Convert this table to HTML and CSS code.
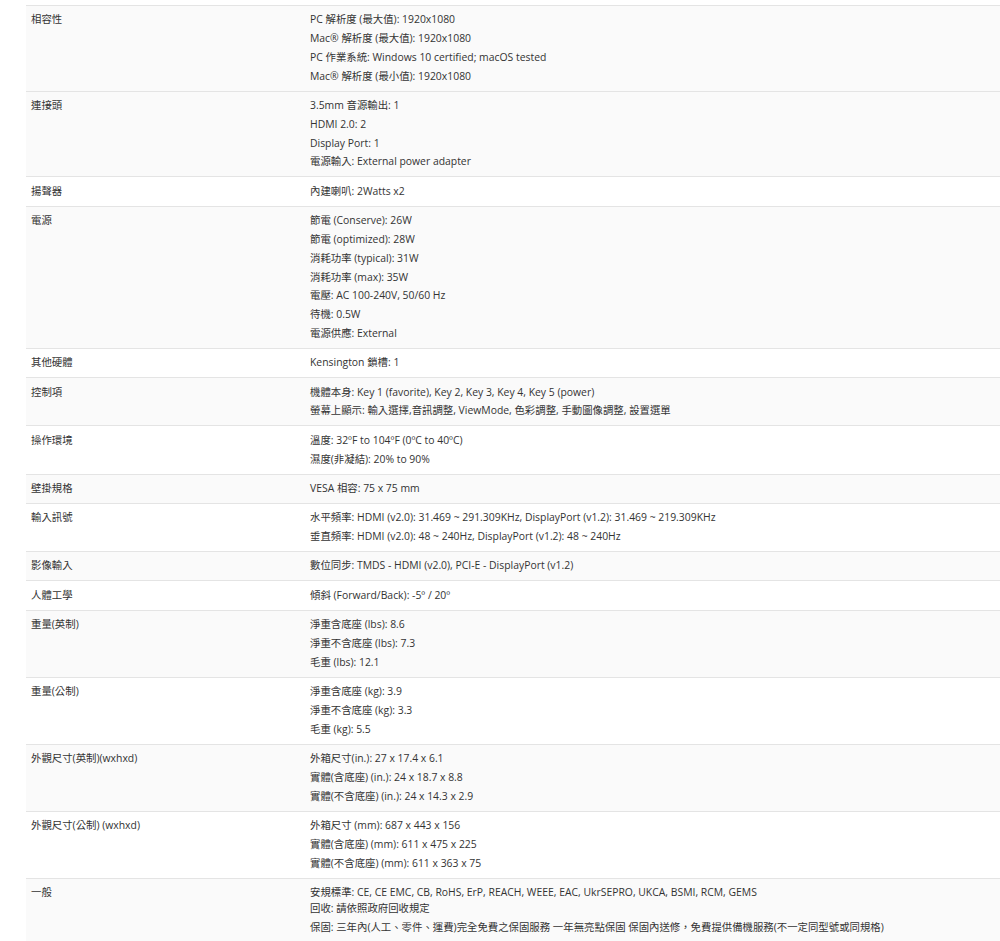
FILE: index.html
```html
<!DOCTYPE html>
<html lang="zh-Hant">
<head>
<meta charset="utf-8">
<title>規格</title>
<link rel="stylesheet" href="styles.css">
</head>
<body>
<section class="specs">
  <div class="row shade">
    <div class="label">相容性</div>
    <div class="values">
      <div class="v">PC 解析度 (最大值): 1920x1080</div>
      <div class="v">Mac® 解析度 (最大值): 1920x1080</div>
      <div class="v">PC 作業系統: Windows 10 certified; macOS tested</div>
      <div class="v">Mac® 解析度 (最小值): 1920x1080</div>
    </div>
  </div>
  <div class="row">
    <div class="label">連接頭</div>
    <div class="values">
      <div class="v">3.5mm 音源輸出: 1</div>
      <div class="v">HDMI 2.0: 2</div>
      <div class="v">Display Port: 1</div>
      <div class="v">電源輸入: External power adapter</div>
    </div>
  </div>
  <div class="row">
    <div class="label">揚聲器</div>
    <div class="values">
      <div class="v">內建喇叭: 2Watts x2</div>
    </div>
  </div>
  <div class="row">
    <div class="label">電源</div>
    <div class="values">
      <div class="v">節電 (Conserve): 26W</div>
      <div class="v">節電 (optimized): 28W</div>
      <div class="v">消耗功率 (typical): 31W</div>
      <div class="v">消耗功率 (max): 35W</div>
      <div class="v">電壓: AC 100-240V, 50/60 Hz</div>
      <div class="v">待機: 0.5W</div>
      <div class="v">電源供應: External</div>
    </div>
  </div>
  <div class="row">
    <div class="label">其他硬體</div>
    <div class="values">
      <div class="v">Kensington 鎖槽: 1</div>
    </div>
  </div>
  <div class="row">
    <div class="label">控制項</div>
    <div class="values">
      <div class="v">機體本身: Key 1 (favorite), Key 2, Key 3, Key 4, Key 5 (power)</div>
      <div class="v">螢幕上顯示: 輸入選擇,音訊調整, ViewMode, 色彩調整, 手動圖像調整, 設置選單</div>
    </div>
  </div>
  <div class="row">
    <div class="label">操作環境</div>
    <div class="values">
      <div class="v">溫度: 32ºF to 104ºF (0ºC to 40ºC)</div>
      <div class="v">濕度(非凝結): 20% to 90%</div>
    </div>
  </div>
  <div class="row">
    <div class="label">壁掛規格</div>
    <div class="values">
      <div class="v">VESA 相容: 75 x 75 mm</div>
    </div>
  </div>
  <div class="row">
    <div class="label">輸入訊號</div>
    <div class="values">
      <div class="v">水平頻率: HDMI (v2.0): 31.469 ~ 291.309KHz, DisplayPort (v1.2): 31.469 ~ 219.309KHz</div>
      <div class="v">垂直頻率: HDMI (v2.0): 48 ~ 240Hz, DisplayPort (v1.2): 48 ~ 240Hz</div>
    </div>
  </div>
  <div class="row">
    <div class="label">影像輸入</div>
    <div class="values">
      <div class="v">數位同步: TMDS - HDMI (v2.0), PCI-E - DisplayPort (v1.2)</div>
    </div>
  </div>
  <div class="row">
    <div class="label">人體工學</div>
    <div class="values">
      <div class="v">傾斜 (Forward/Back): -5º / 20º</div>
    </div>
  </div>
  <div class="row">
    <div class="label">重量(英制)</div>
    <div class="values">
      <div class="v">淨重含底座 (lbs): 8.6</div>
      <div class="v">淨重不含底座 (lbs): 7.3</div>
      <div class="v">毛重 (lbs): 12.1</div>
    </div>
  </div>
  <div class="row">
    <div class="label">重量(公制)</div>
    <div class="values">
      <div class="v">淨重含底座 (kg): 3.9</div>
      <div class="v">淨重不含底座 (kg): 3.3</div>
      <div class="v">毛重 (kg): 5.5</div>
    </div>
  </div>
  <div class="row">
    <div class="label">外觀尺寸(英制)(wxhxd)</div>
    <div class="values">
      <div class="v">外箱尺寸(in.): 27 x 17.4 x 6.1</div>
      <div class="v">實體(含底座) (in.): 24 x 18.7 x 8.8</div>
      <div class="v">實體(不含底座) (in.): 24 x 14.3 x 2.9</div>
    </div>
  </div>
  <div class="row">
    <div class="label">外觀尺寸(公制) (wxhxd)</div>
    <div class="values">
      <div class="v">外箱尺寸 (mm): 687 x 443 x 156</div>
      <div class="v">實體(含底座) (mm): 611 x 475 x 225</div>
      <div class="v">實體(不含底座) (mm): 611 x 363 x 75</div>
    </div>
  </div>
  <div class="row">
    <div class="label">一般</div>
    <div class="values">
      <div class="v">安規標準: CE, CE EMC, CB, RoHS, ErP, REACH, WEEE, EAC, UkrSEPRO, UKCA, BSMI, RCM, GEMS<br>回收: 請依照政府回收規定</div>
      <div class="v">保固: 三年內(人工、零件、運費)完全免費之保固服務 一年無亮點保固 保固內送修，免費提供備機服務(不一定同型號或同規格)</div>
    </div>
  </div>
</section>
</body>
</html>
```

FILE: styles.css
```css
html, body {
  margin: 0;
  padding: 0;
  background: #ffffff;
}

body {
  font-family: "Open Sans", "Noto Sans CJK TC", sans-serif;
  font-size: 10.4px;
  color: #333333;
}

.specs {
  padding: 5px 0 0 26px;
}

.row {
  display: grid;
  grid-template-columns: 279px 1fr;
  border-top: 1px solid #e4e4e4;
  padding: 4px 0 5.6px;
}

.row:nth-child(even),
.row.shade {
  background: #fafafa;
}

.label {
  padding: 1.4px 5px;
  line-height: 16px;
}

.values {
  padding: 0 5px;
}

.v {
  line-height: 16px;
  padding: 1.4px 0;
}
```
